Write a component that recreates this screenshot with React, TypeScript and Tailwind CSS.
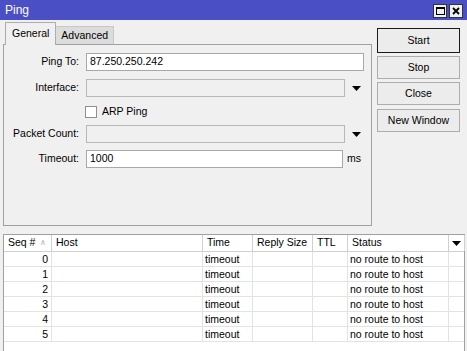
const rows = [0, 1, 2, 3, 4, 5];

const cols = [
  { key: "seq", label: "Seq #", w: "w-[48px]" },
  { key: "host", label: "Host", w: "w-[151px]" },
  { key: "time", label: "Time", w: "w-[50px]" },
  { key: "reply", label: "Reply Size", w: "w-[60px]" },
  { key: "ttl", label: "TTL", w: "w-[35px]" },
  { key: "status", label: "Status", w: "w-[101px]" },
];

function Arrow() {
  return (
    <svg width="9" height="5" viewBox="0 0 9 5" className="block">
      <path d="M0 0h9L4.5 5z" fill="#000" />
    </svg>
  );
}

function Field({ label, children }: { label: string; children: React.ReactNode }) {
  return (
    <div className="flex items-center h-[18px]">
      <div className="w-[78px] pr-[3px] text-right">{label}</div>
      <div className="flex items-center ml-[4px]">{children}</div>
    </div>
  );
}

function Button({ label, primary }: { label: string; primary?: boolean }) {
  return (
    <div
      className={`flex items-center justify-center bg-[#ececec] border ${
        primary ? "h-[25px] border-[#1a1a1a]" : "h-[23px] border-[#adadad]"
      }`}
    >
      {label}
    </div>
  );
}

export default function App() {
  return (
    <div
      className="w-[467px] h-[351px] bg-[#f0f0f0] flex flex-col overflow-hidden text-[10.5px] text-black"
      style={{ fontFamily: '"Liberation Sans", Arial, sans-serif' }}
    >
      {/* title bar */}
      <div className="h-[20px] bg-[#4b4fc6] flex items-center justify-between pl-[5px] pr-[4px] shrink-0">
        <span className="text-white text-[12px]">Ping</span>
        <div className="flex gap-[2px] mt-[2px]">
          <div className="w-[14px] h-[14px] bg-[#f0f0f0] border border-[#333] flex items-center justify-center">
            <div className="w-[9px] h-[8px] border border-black border-t-2" />
          </div>
          <div className="w-[14px] h-[14px] bg-[#f0f0f0] border border-[#333] flex items-center justify-center">
            <svg width="8" height="8" viewBox="0 0 8 8">
              <path d="M1 1L7 7M7 1L1 7" stroke="#000" strokeWidth="1.8" />
            </svg>
          </div>
        </div>
      </div>

      <div className="flex shrink-0">
        {/* left: tabs + form */}
        <div className="ml-[3px] w-[369px] flex flex-col">
          <div className="flex items-end h-[24px] pl-[2px]">
            <div className="h-[23px] px-[6px] border border-b-0 border-[#adadad] bg-[#f0f0f0] flex items-center relative top-[1px] z-10">
              General
            </div>
            <div className="h-[18px] px-[5px] border border-l-0 border-b-0 border-[#c8c8c8] bg-[#dcdcdc] flex items-center">
              Advanced
            </div>
          </div>
          <div className="h-[182px] border border-[#a0a0a0] flex flex-col pt-[8px]">
            <Field label="Ping To:">
              <div className="w-[278px] h-[18px] bg-white border border-[#a8a8a8] flex items-center px-[3px]">
                87.250.250.242
              </div>
            </Field>
            <div className="mt-[8px]">
              <Field label="Interface:">
                <div className="w-[259px] h-[18px] border border-[#b8b8b8]" />
                <div className="ml-[7px]">
                  <Arrow />
                </div>
              </Field>
            </div>
            <div className="flex items-center h-[18px] mt-[6px] pl-[81px]">
              <div className="w-[12px] h-[12px] bg-white border border-[#8f8f8f]" />
              <span className="ml-[5px]">ARP Ping</span>
            </div>
            <div className="mt-[4px]">
              <Field label="Packet Count:">
                <div className="w-[259px] h-[18px] border border-[#b8b8b8]" />
                <div className="ml-[7px]">
                  <Arrow />
                </div>
              </Field>
            </div>
            <div className="mt-[7px]">
              <Field label="Timeout:">
                <div className="w-[257px] h-[18px] bg-white border border-[#a8a8a8] flex items-center px-[3px]">
                  1000
                </div>
                <span className="ml-[4px]">ms</span>
              </Field>
            </div>
          </div>
        </div>

        {/* right: buttons */}
        <div className="ml-[5px] w-[83px] mt-[8px] flex flex-col gap-[3px]">
          <Button label="Start" primary />
          <Button label="Stop" />
          <Button label="Close" />
          <div className="mt-[1px]">
            <Button label="New Window" />
          </div>
        </div>
      </div>

      {/* table */}
      <div className="mt-[8px] ml-[3px] w-[462px] flex-1 bg-white border-l border-r border-t border-[#a0a0a0] flex flex-col">
        <div className="flex h-[17px] border-b border-[#d0d0d0] shrink-0">
          {cols.map((c) => (
            <div
              key={c.key}
              className={`${c.w} shrink-0 border-r border-[#d0d0d0] flex items-center px-[4px]`}
            >
              <span>{c.label}</span>
              {c.key === "seq" && <span className="ml-[5px] text-[8px] text-[#b0b0b0]">∧</span>}
            </div>
          ))}
          <div className="w-[16px] shrink-0 border-r border-[#d0d0d0] flex items-center justify-center">
            <Arrow />
          </div>
        </div>
        {rows.map((r) => (
          <div key={r} className="flex h-[15px] border-b border-[#e3e3e3] shrink-0">
            <div className="w-[48px] shrink-0 border-r border-[#e3e3e3] text-right pr-[3px] leading-[14px]">{r}</div>
            <div className="w-[151px] shrink-0 border-r border-[#e3e3e3]" />
            <div className="w-[50px] shrink-0 border-r border-[#e3e3e3] pl-[2px] leading-[14px]">timeout</div>
            <div className="w-[60px] shrink-0 border-r border-[#e3e3e3]" />
            <div className="w-[35px] shrink-0 border-r border-[#e3e3e3]" />
            <div className="w-[101px] shrink-0 border-r border-[#e3e3e3] pl-[2px] leading-[14px]">no route to host</div>
            <div className="w-[16px] shrink-0" />
          </div>
        ))}
      </div>
    </div>
  );
}
